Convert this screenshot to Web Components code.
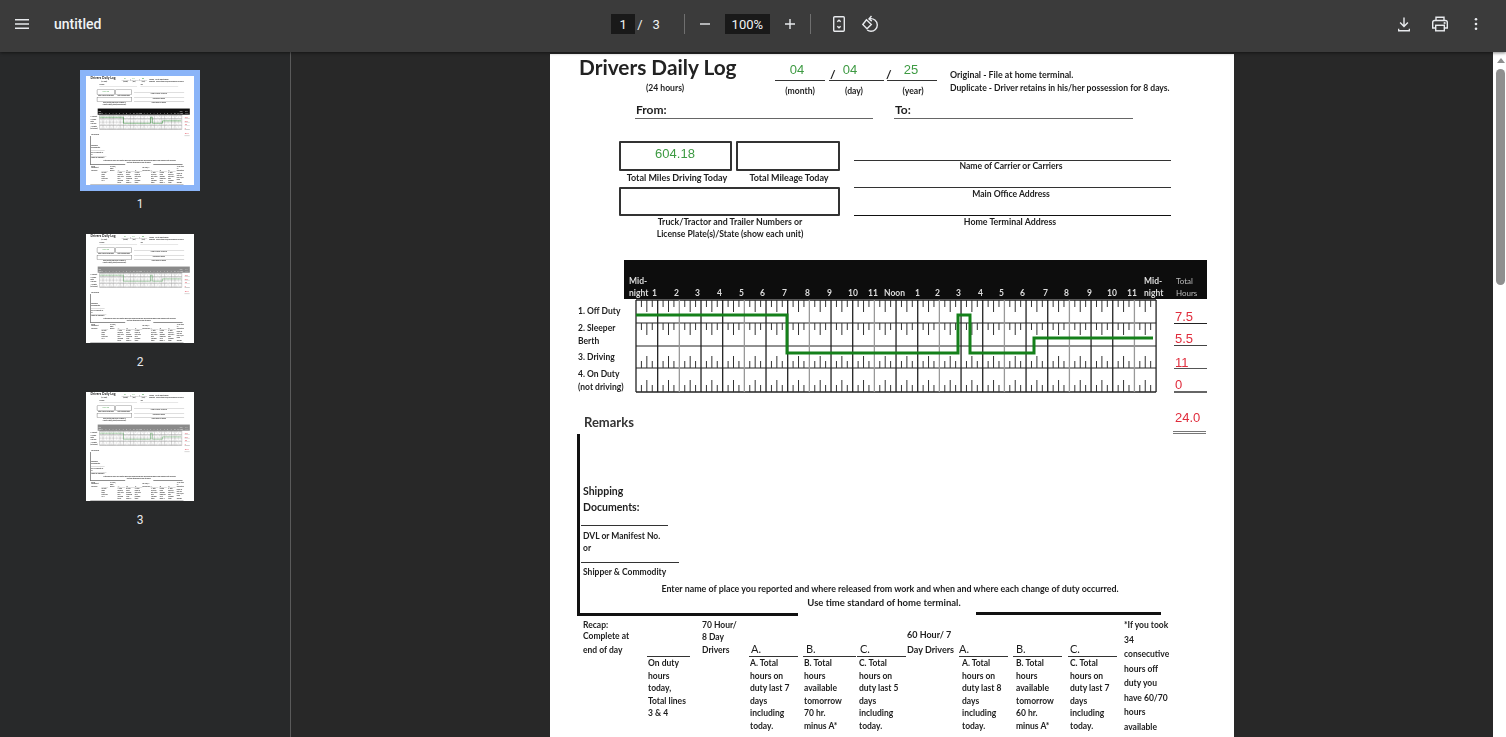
<!DOCTYPE html>
<html>
<head>
<meta charset="utf-8">
<title>untitled</title>
<style>
html, body { margin: 0; height: 100%; overflow: hidden; background: #282828; }
body { font-family: Roboto, "Liberation Sans", sans-serif; color: #e8eaed; }
</style>
</head>
<body>
<pdf-viewer></pdf-viewer>

<template id="tmpl-page">
  <style>
    :host { display: block; position: relative; width: 684px; height: 690px; background: #fff; color: #1d1d1d; font: 700 9px/12px Lato, "Liberation Sans", sans-serif; overflow: hidden; }
    .sheet { position: absolute; inset: 0; filter: blur(.45px); }
    .t, .v, .r, .b { position: absolute; white-space: nowrap; }
    .c { transform: translateX(-50%); }
    .v { font: 400 13px/14px "Liberation Sans", sans-serif; color: #3d9a42; }
    .r { height: 1px; background: #333; }
    .b { border: 2px solid #333; border-radius: 1px; box-sizing: border-box; }
    .red { font: 400 13px/14px "Liberation Sans", sans-serif; color: #e02c3c; position: absolute; }
    svg { position: absolute; left: 0; top: 0; }
    .head { position: absolute; left: 74px; top: 206px; width: 583px; height: 39px; background: #0d0d0d; color: #ddd; font-size: 8.5px; line-height: 12px; }
    .head span { position: absolute; bottom: 0; white-space: nowrap; }
    :host([muted]) .head { background: #8a8a8a; }
    :host([muted]) svg .drive { stroke: #58a65c; }
  </style>
  <div class="sheet">
    <div class="t" style="left:29px;top:0;font-size:20.8px;line-height:26px;color:#222">Drivers Daily Log</div>
    <div class="t c" style="left:115px;top:28px;font-size:8.6px">(24 hours)</div>
    <div class="v c" style="left:247px;top:9px">04</div>
    <div class="v c" style="left:300px;top:9px">04</div>
    <div class="v c" style="left:361px;top:9px">25</div>
    <div class="t" style="left:280px;top:15px;font-size:12px">/</div>
    <div class="t" style="left:336px;top:15px;font-size:12px">/</div>
    <div class="r" style="left:225px;top:26px;width:50px"></div>
    <div class="r" style="left:279px;top:26px;width:55px"></div>
    <div class="r" style="left:337px;top:26px;width:50px"></div>
    <div class="t c" style="left:250px;top:31px;font-size:8.6px">(month)</div>
    <div class="t c" style="left:304px;top:31px;font-size:8.6px">(day)</div>
    <div class="t c" style="left:363px;top:31px;font-size:8.6px">(year)</div>
    <div class="t" style="left:400px;top:15px;font-size:8.8px">Original - File at home terminal.</div>
    <div class="t" style="left:400px;top:28px;font-size:8.6px">Duplicate - Driver retains in his/her possession for 8 days.</div>
    <div class="t" style="left:86px;top:49px;font-size:12px;line-height:14px">From:</div>
    <div class="t" style="left:345px;top:49px;font-size:12px;line-height:14px">To:</div>
    <div class="r" style="left:85px;top:64px;width:238px;background:#666"></div>
    <div class="r" style="left:344px;top:64px;width:239px;background:#666"></div>

    <div class="b" style="left:69px;top:87px;width:113px;height:30px"></div>
    <div class="v c" style="left:125px;top:93px">604.18</div>
    <div class="b" style="left:186px;top:87px;width:104px;height:30px"></div>
    <div class="t c" style="left:127px;top:118px">Total Miles Driving Today</div>
    <div class="t c" style="left:239px;top:118px">Total Mileage Today</div>
    <div class="b" style="left:69px;top:133px;width:221px;height:29px"></div>
    <div class="t c" style="left:180px;top:162px;font-size:8.8px">Truck/Tractor and Trailer Numbers or</div>
    <div class="t c" style="left:180px;top:174px;font-size:8.65px">License Plate(s)/State (show each unit)</div>
    <div class="r" style="left:304px;top:106px;width:317px"></div>
    <div class="r" style="left:304px;top:133px;width:317px"></div>
    <div class="r" style="left:304px;top:161px;width:317px;background:#111"></div>
    <div class="t c" style="left:461px;top:106px;font-size:8.6px">Name of Carrier or Carriers</div>
    <div class="t c" style="left:461px;top:134px;font-size:8.6px">Main Office Address</div>
    <div class="t c" style="left:460px;top:162px;font-size:8.8px">Home Terminal Address</div>

    <div class="head" id="head"></div>
    <svg id="grid" width="684" height="690" viewBox="0 0 684 690"></svg>

    <div class="t" style="left:28px;top:251px;font-size:8.5px">1. Off Duty</div>
    <div class="t" style="left:28px;top:268px;font-size:8.5px">2. Sleeper</div>
    <div class="t" style="left:28px;top:281px;font-size:8.5px">Berth</div>
    <div class="t" style="left:28px;top:297px;font-size:8.5px">3. Driving</div>
    <div class="t" style="left:28px;top:314px;font-size:8.5px">4. On Duty</div>
    <div class="t" style="left:28px;top:327px;font-size:8.5px">(not driving)</div>

    <div class="red" style="left:625px;top:256px">7.5</div>
    <div class="red" style="left:625px;top:278px">5.5</div>
    <div class="red" style="left:625px;top:302px">11</div>
    <div class="red" style="left:625px;top:324px">0</div>
    <div class="red" style="left:625px;top:357px">24.0</div>
    <div class="r" style="left:624px;top:269px;width:33px;background:#222"></div>
    <div class="r" style="left:624px;top:291px;width:33px;background:#444"></div>
    <div class="r" style="left:624px;top:314px;width:33px;background:#555"></div>
    <div class="r" style="left:624px;top:337px;width:33px;height:2px;background:#666"></div>
    <div class="r" style="left:623px;top:377px;width:33px;background:#777"></div>
    <div class="r" style="left:623px;top:379px;width:33px;background:#777"></div>

    <div class="t" style="left:34px;top:360px;font-size:13px;line-height:16px;color:#333">Remarks</div>
    <div class="r" style="left:27px;top:380px;width:3px;height:181px;background:#111"></div>
    <div class="r" style="left:27px;top:559px;width:221px;height:3px;background:#111"></div>
    <div class="r" style="left:426px;top:558px;width:185px;height:3px;background:#111"></div>
    <div class="t" style="left:33px;top:429px;font-size:10.5px;line-height:16px">Shipping<br>Documents:</div>
    <div class="r" style="left:31px;top:471px;width:87px"></div>
    <div class="t" style="left:33px;top:476px;font-size:8.5px">DVL or Manifest No.</div>
    <div class="t" style="left:33px;top:488px;font-size:8.5px">or</div>
    <div class="r" style="left:31px;top:508px;width:98px"></div>
    <div class="t" style="left:33px;top:512px;font-size:8.5px">Shipper &amp; Commodity</div>
    <div class="t c" style="left:340px;top:529px;font-size:8.9px">Enter name of place you reported and where released from work and when and where each change of duty occurred.</div>
    <div class="t c" style="left:334px;top:543px;font-size:9.5px">Use time standard of home terminal.</div>

    <div class="t" style="left:33px;top:566px;font-size:8.5px;line-height:11px">Recap:<br>Complete at</div>
    <div class="t" style="left:33px;top:590px;font-size:8.5px">end of day</div>
    <div class="t" style="left:152px;top:565px;font-size:8.5px;line-height:12px">70 Hour/<br>8 Day</div>
    <div class="t" style="left:152px;top:590px;font-size:8.5px">Drivers</div>
    <div class="t" style="left:357px;top:575px;font-size:9px">60 Hour/ 7</div>
    <div class="t" style="left:357px;top:590px;font-size:9px">Day Drivers</div>

    <div class="t" style="left:201px;top:589px;font-size:11px;font-weight:400">A.</div>
    <div class="t" style="left:256px;top:589px;font-size:11px;font-weight:400">B.</div>
    <div class="t" style="left:310px;top:589px;font-size:11px;font-weight:400">C.</div>
    <div class="t" style="left:409px;top:589px;font-size:11px;font-weight:400">A.</div>
    <div class="t" style="left:466px;top:589px;font-size:11px;font-weight:400">B.</div>
    <div class="t" style="left:520px;top:589px;font-size:11px;font-weight:400">C.</div>
    <div class="r" style="left:97px;top:602px;width:43px"></div>
    <div class="r" style="left:199px;top:602px;width:49px"></div>
    <div class="r" style="left:253px;top:602px;width:53px"></div>
    <div class="r" style="left:307px;top:602px;width:49px"></div>
    <div class="r" style="left:409px;top:602px;width:49px"></div>
    <div class="r" style="left:463px;top:602px;width:49px"></div>
    <div class="r" style="left:518px;top:602px;width:49px"></div>

    <div class="t" style="left:98px;top:603px;font-size:8.5px;line-height:12.6px">On duty<br>hours<br>today,<br>Total lines<br>3 &amp; 4</div>
    <div class="t" style="left:200px;top:603px;font-size:8.5px;line-height:12.6px">A. Total<br>hours on<br>duty last 7<br>days<br>including<br>today.</div>
    <div class="t" style="left:254px;top:603px;font-size:8.5px;line-height:12.6px">B. Total<br>hours<br>available<br>tomorrow<br>70 hr.<br>minus A*</div>
    <div class="t" style="left:309px;top:603px;font-size:8.5px;line-height:12.6px">C. Total<br>hours on<br>duty last 5<br>days<br>including<br>today.</div>
    <div class="t" style="left:412px;top:603px;font-size:8.5px;line-height:12.6px">A. Total<br>hours on<br>duty last 8<br>days<br>including<br>today.</div>
    <div class="t" style="left:466px;top:603px;font-size:8.5px;line-height:12.6px">B. Total<br>hours<br>available<br>tomorrow<br>60 hr.<br>minus A*</div>
    <div class="t" style="left:520px;top:603px;font-size:8.5px;line-height:12.6px">C. Total<br>hours on<br>duty last 7<br>days<br>including<br>today.</div>
    <div class="t" style="left:574px;top:564px;font-size:8.5px;line-height:14.5px">*If you took<br>34<br>consecutive<br>hours off<br>duty you<br>have 60/70<br>hours<br>available</div>
    <div class="r" style="left:27px;top:686px;width:590px;height:2px;background:#444"></div>
  </div>
</template>

<script>
// the 24 hour ruler of the log is drawn, not typed out
function drawGrid(svg) {
  var left = 86, hour = 21.67, rows = [246, 269, 292, 314, 338], out = '';
  for (var r = 0; r < rows.length; r++) {
    out += '<line x1="' + left + '" x2="' + (left + hour * 24) + '" y1="' + rows[r] + '" y2="' + rows[r] + '" stroke="#222" stroke-width="' + (r == 0 || r == 4 ? 1.5 : 1) + '"/>';
  }
  for (var h = 0; h <= 24; h++) {
    var x = left + h * hour;
    var shade = (h % 3 == 2) ? '#999' : '#222';
    out += '<line x1="' + x + '" x2="' + x + '" y1="246" y2="338" stroke="' + shade + '" stroke-width="1.3"/>';
    if (h == 24) break;
    for (var q = 1; q < 4; q++) {
      var tx = x + q * hour / 4, len = q == 2 ? 12 : 7;
      out += tick(tx, 246, 246 + len) + tick(tx, 269, 269 + len);
      out += tick(tx, 314 - len, 314) + tick(tx, 338 - len, 338);
    }
  }
  // duty status line
  out += '<polyline class="drive" fill="none" stroke="#14801a" stroke-width="3" points="86,261 237,261 237,299 408,299 408,261 420,261 420,299 484,299 484,284 603,284"/>';
  svg.innerHTML = out;
}

function tick(x, y1, y2) {
  return '<line x1="' + x + '" x2="' + x + '" y1="' + y1 + '" y2="' + y2 + '" stroke="#333" stroke-width="1"/>';
}

function fillHead(head) {
  var labels = [['Mid-<br>night', 5], ['1', 28], ['2', 50], ['3', 71], ['4', 93], ['5', 115], ['6', 136], ['7', 158], ['8', 181], ['9', 203], ['10', 224], ['11', 244], ['Noon', 260], ['1', 291], ['2', 311], ['3', 332], ['4', 354], ['5', 375], ['6', 396], ['7', 419], ['8', 440], ['9', 463], ['10', 483], ['11', 503], ['Mid-<br>night', 520]];
  var html = '';
  labels.forEach(function (l) {
    html += '<span style="left:' + l[1] + 'px">' + l[0] + '</span>';
  });
  html += '<span style="left:552px;font-weight:400;color:#bbb;font-size:8px">Total<br>Hours</span>';
  head.innerHTML = html;
}

class LogPage extends HTMLElement {
  connectedCallback() {
    var root = this.attachShadow({mode: 'open'});
    root.appendChild(document.getElementById('tmpl-page').content.cloneNode(true));
    drawGrid(root.getElementById('grid'));
    fillHead(root.getElementById('head'));
  }
}
customElements.define('log-page', LogPage);

class IconButton extends HTMLElement {
  connectedCallback() {
    this.attachShadow({mode: 'open'}).innerHTML = `
      <style>
        :host { display: flex; align-items: center; justify-content: center; width: 36px; height: 36px; color: #e8eaed; flex: none; }
        ::slotted(svg) { display: block; }
      </style>
      <slot></slot>`;
  }
}
customElements.define('icon-button', IconButton);

class ToolBar extends HTMLElement {
  connectedCallback() {
    this.attachShadow({mode: 'open'}).innerHTML = `
      <style>
        :host { display: grid; grid-template-columns: 1fr auto 1fr; align-items: center; box-sizing: border-box; height: 52px; padding-bottom: 4px; background: #3b3b3b; font: 500 14px Roboto, "Liberation Sans", sans-serif; color: #f1f3f4; position: relative; z-index: 2; box-shadow: 0 1px 3px rgba(0,0,0,.5); }
        .left, .mid, .right { display: flex; align-items: center; }
        .left { padding-left: 4px; gap: 14px; }
        .right { justify-content: flex-end; padding-right: 12px; }
        .name { font-size: 14px; }
        .box { background: #191919; height: 20px; display: flex; align-items: center; justify-content: center; font-size: 13px; font-weight: 400; }
        .slash { font-size: 13px; font-weight: 400; display: flex; gap: 10px; margin: 0 0 0 2px; }
        .sep { width: 1px; height: 20px; background: #6f6f6f; }
        .mid { transform: translateX(-1px); }
      </style>
      <div class="left">
        <icon-button><svg width="20" height="20" viewBox="0 0 20 20" fill="#e8eaed"><path d="M3 5h14v1.500H3zM3 9.200h14v1.500H3zM3 13.500h14V15H3z"/></svg></icon-button>
        <span class="name">untitled</span>
      </div>
      <div class="mid">
        <span class="box" style="width:24px">1</span>
        <span class="slash"><span>/</span><span>3</span></span>
        <span style="width:24px"></span>
        <span class="sep"></span>
        <icon-button style="margin:0 2px"><svg width="20" height="20" viewBox="0 0 20 20" fill="#e8eaed"><path d="M5 9.300h10v1.400H5z"/></svg></icon-button>
        <span class="box" style="width:45px">100%</span>
        <icon-button style="margin:0 2px"><svg width="20" height="20" viewBox="0 0 20 20" fill="#e8eaed"><path d="M9.300 5h1.400v4.300H15v1.400h-4.300V15H9.300v-4.300H5V9.300h4.300z"/></svg></icon-button>
        <span class="sep"></span>
        <icon-button style="margin-left:10px"><svg width="20" height="20" viewBox="0 0 20 20" fill="none" stroke="#e8eaed" stroke-width="1.400"><rect x="4.700" y="2.700" width="10.600" height="14.600" rx="1"/><path d="M8.300 7.800 10 6.200l1.700 1.600M8.300 12.200 10 13.800l1.700-1.600"/></svg></icon-button>
        <icon-button style="margin:0 5px 0 -5px"><svg width="20" height="20" viewBox="0 0 20 20" fill="none" stroke="#e8eaed" stroke-width="1.400"><path d="M6.500 5.800 2.800 10.500l4.200 4.200 4.300-4.200z"/><path d="M9.500 4.800c4-.8 7.800 2 7.800 6.200 0 3.700-3 6.300-6.300 6.300-1.500 0-2.800-.5-3.800-1.300"/><path d="M11.500 2 9 4.800l2.800 2.300"/></svg></icon-button>
      </div>
      <div class="right">
        <icon-button><svg width="20" height="20" viewBox="0 0 20 20" fill="#e8eaed"><path d="M9.300 3.500h1.400v7.200l2.700-2.700 1 1L10 13.400 5.600 9l1-1 2.700 2.700zM4 14.800h1.300v1.200h9.400v-1.200H16v2.600H4z"/></svg></icon-button>
        <icon-button><svg width="20" height="20" viewBox="0 0 20 20" fill="none" stroke="#e8eaed" stroke-width="1.400"><path d="M6 6.500V3.200h8v3.300"/><path d="M5.500 14H2.700V8.500c0-1 .8-2 2-2h10.600c1.200 0 2 1 2 2V14h-2.800"/><rect x="5.700" y="11.300" width="8.600" height="5.500"/><circle cx="14.600" cy="9.100" r=".4" fill="#e8eaed"/></svg></icon-button>
        <icon-button><svg width="20" height="20" viewBox="0 0 20 20" fill="#e8eaed"><circle cx="10" cy="5.300" r="1.300"/><circle cx="10" cy="10" r="1.300"/><circle cx="10" cy="14.700" r="1.300"/></svg></icon-button>
      </div>`;
  }
}
customElements.define('tool-bar', ToolBar);

// a small copy of the page, scaled down, with its number below
class PageThumb extends HTMLElement {
  connectedCallback() {
    var active = this.hasAttribute('active');
    var muted = this.hasAttribute('muted');
    this.attachShadow({mode: 'open'}).innerHTML = `
      <style>
        :host { display: flex; flex-direction: column; align-items: center; }
        .frame { padding: 6px; background: ${active ? '#8ab4f8' : 'transparent'}; }
        .clip { width: 108px; height: 109px; overflow: hidden; background: #fff; filter: blur(.5px); }
        log-page { transform: scale(.158); transform-origin: 0 0; }
        .num { font: 400 12px/14px Roboto, "Liberation Sans", sans-serif; color: #e8eaed; margin-top: 6px; }
      </style>
      <div class="frame"><div class="clip"><log-page ${muted ? 'muted' : ''}></log-page></div></div>
      <div class="num"><slot></slot></div>`;
  }
}
customElements.define('page-thumb', PageThumb);

class SideBar extends HTMLElement {
  connectedCallback() {
    this.attachShadow({mode: 'open'}).innerHTML = `
      <style>
        :host { display: flex; flex-direction: column; align-items: center; gap: 17px; width: 280px; flex: none; background: #28292a; border-right: 1px solid #5a5a5a; padding: 18px 10px 0 0; }
      </style>
      <slot></slot>`;
  }
}
customElements.define('side-bar', SideBar);

class ScrollTrack extends HTMLElement {
  connectedCallback() {
    this.attachShadow({mode: 'open'}).innerHTML = `
      <style>
        :host { display: flex; flex-direction: column; align-items: center; box-sizing: border-box; width: 13px; padding: 0 1px 0 3px; flex: none; background: #fff; }
        .up { width: 0; height: 0; margin-top: 6px; border: 4.500px solid transparent; border-top: 0; border-bottom: 5px solid #8f8f8f; }
        .thumb { width: 9px; height: 216px; margin-top: 6px; background: #8f8f8f; border-radius: 5px; }
      </style>
      <div class="up"></div>
      <div class="thumb"></div>`;
  }
}
customElements.define('scroll-track', ScrollTrack);

class PdfViewer extends HTMLElement {
  connectedCallback() {
    this.attachShadow({mode: 'open'}).innerHTML = `
      <style>
        :host { display: flex; flex-direction: column; height: 737px; background: #282828; }
        .body { display: flex; flex: 1; min-height: 0; overflow: hidden; }
        main { flex: 1; display: flex; justify-content: center; padding-top: 2px; min-width: 0; }
        main log-page { flex: none; }
      </style>
      <tool-bar></tool-bar>
      <div class="body">
        <side-bar>
          <page-thumb active>1</page-thumb>
          <page-thumb muted>2</page-thumb>
          <page-thumb muted>3</page-thumb>
        </side-bar>
        <main><log-page></log-page></main>
        <scroll-track></scroll-track>
      </div>`;
  }
}
customElements.define('pdf-viewer', PdfViewer);
</script>
</body>
</html>
